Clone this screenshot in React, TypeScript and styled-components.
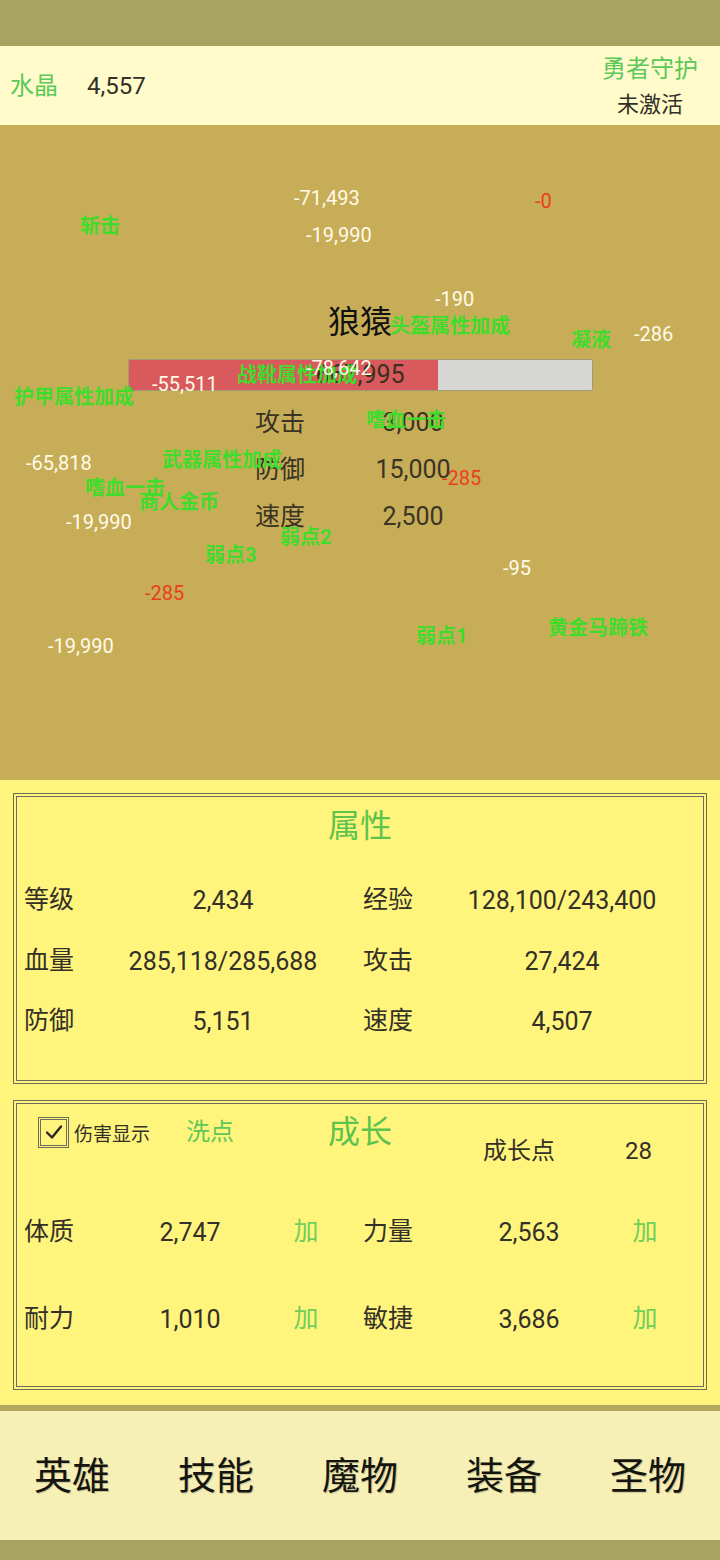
import * as React from "react";
import styled, { createGlobalStyle } from "styled-components";

const GlobalStyle = createGlobalStyle`
  html, body {
    margin: 0;
    padding: 0;
    background: #a9a363;
  }
  body {
    font-family: Roboto, "Noto Sans CJK SC", sans-serif;
  }
`;

const Screen = styled.div`
  width: 720px;
  height: 1560px;
  display: flex;
  flex-direction: column;
  overflow: hidden;
`;

const StatusBar = styled.div`
  height: 46px;
  flex: none;
  background: #a9a363;
`;

const Header = styled.div`
  height: 79px;
  flex: none;
  background: #fffbca;
  display: flex;
  align-items: center;
  justify-content: space-between;
  padding: 0 22px 0 10px;
  box-sizing: border-box;
`;

const CrystalGroup = styled.div`
  display: flex;
  align-items: center;
  gap: 29px;
`;

const GreenLabel = styled.span<{ $size?: number }>`
  color: #5cc85a;
  font-size: ${(p) => p.$size ?? 24}px;
  line-height: 36px;
`;

const DarkText = styled.span<{ $size?: number }>`
  color: #333028;
  font-size: ${(p) => p.$size ?? 24}px;
  line-height: 36px;
`;

const GuardGroup = styled.div`
  display: flex;
  flex-direction: column;
  align-items: center;
  padding-top: 2px;
`;

const Battle = styled.div`
  height: 655px;
  flex: none;
  background: #c8ad58;
  position: relative;
  padding-top: 177px;
  box-sizing: border-box;
`;

const MonsterName = styled.div`
  text-align: center;
  font-size: 32px;
  line-height: 40px;
  color: #111;
`;

const HpBar = styled.div`
  width: 465px;
  height: 32px;
  margin: 17px auto 0;
  box-sizing: border-box;
  border: 1px solid #a39a78;
  border-radius: 2px;
  background: #d6d6d4;
  position: relative;
  overflow: hidden;
`;

const HpFill = styled.div`
  position: absolute;
  left: 0;
  top: 0;
  bottom: 0;
  background: #d95a5c;
`;

const HpText = styled.div`
  position: relative;
  text-align: center;
  font-size: 25px;
  line-height: 30px;
  color: #3a3022;
`;

const MonsterStats = styled.div`
  display: grid;
  grid-template-columns: 100px 116px;
  margin: 8px 0 0 255px;
`;

const MonsterCell = styled.div<{ $value?: boolean }>`
  font-size: 25px;
  line-height: 47px;
  height: 47px;
  color: #3a3424;
  text-align: ${(p) => (p.$value ? "center" : "left")};
`;

const Float = styled.div<{ $kind: "w" | "g" | "r" }>`
  position: absolute;
  font-size: 20px;
  line-height: 22px;
  white-space: nowrap;
  font-weight: ${(p) => (p.$kind === "g" ? 700 : 400)};
  color: ${(p) =>
    p.$kind === "w" ? "#fffbe8" : p.$kind === "g" ? "#3fdc2c" : "#e8401c"};
`;

const PanelArea = styled.div`
  flex: none;
  height: 625px;
  background: #fff47c;
  padding: 13px 13px 15px;
  box-sizing: border-box;
  display: flex;
  flex-direction: column;
  gap: 16px;
`;

const Panel = styled.div<{ $height: number }>`
  height: ${(p) => p.$height}px;
  border: 4px double #6e6c5c;
  box-sizing: border-box;
`;

const PanelTitle = styled.div`
  text-align: center;
  font-size: 32px;
  line-height: 40px;
  color: #5cc34e;
`;

const AttrTitle = styled(PanelTitle)`
  padding-top: 9px;
  margin-bottom: 25px;
`;

const RowGrid = styled.div<{ $cols: string; $rowHeight: number }>`
  display: grid;
  grid-template-columns: ${(p) => p.$cols};
  grid-auto-rows: ${(p) => p.$rowHeight}px;
  align-items: center;
  padding-left: 7px;
`;

const Cell = styled.div<{ $center?: boolean; $green?: boolean }>`
  font-size: 25px;
  line-height: 36px;
  color: ${(p) => (p.$green ? "#6fcf5a" : "#333028")};
  text-align: ${(p) => (p.$center ? "center" : "left")};
  white-space: nowrap;
`;

const LabelCell = styled(Cell)`
  position: relative;
  top: -1px;
`;

const GrowthHeader = styled.div`
  display: grid;
  grid-template-columns: 1fr auto 1fr;
  align-items: start;
  padding-top: 8px;
  margin-bottom: 18px;
`;

const GrowthLeft = styled.div`
  display: flex;
  align-items: center;
  height: 40px;
  padding-left: 21px;
`;

const CheckBox = styled.div`
  width: 31px;
  height: 31px;
  box-sizing: border-box;
  border: 3px double #6e6c5c;
  display: flex;
  align-items: center;
  justify-content: center;
  margin-right: 5px;
`;

const CheckLabel = styled.span`
  font-size: 19px;
  color: #333028;
  margin-right: 36px;
`;

const GrowthRight = styled.div`
  display: flex;
  align-items: center;
  height: 40px;
  margin-top: 19px;
  padding-left: 91px;
  gap: 70px;
`;

const Divider = styled.div`
  height: 6px;
  flex: none;
  background: #b3a95e;
`;

const Nav = styled.div`
  height: 129px;
  flex: none;
  background: #f7f0b6;
  display: grid;
  grid-template-columns: repeat(5, 1fr);
  align-items: center;
`;

const NavItem = styled.div`
  text-align: center;
  font-size: 38px;
  color: #151510;
  text-shadow: 1px 1px 1px rgba(0, 0, 0, 0.2);
  position: relative;
  top: -3px;
`;

const BottomBar = styled.div`
  flex: 1;
  background: #a9a363;
`;

type Kind = "w" | "g" | "r";

const floats: [string, number, number, Kind][] = [
  ["-71,493", 294, 198, "w"],
  ["-19,990", 306, 235, "w"],
  ["斩击", 80, 226, "g"],
  ["-0", 535, 201, "r"],
  ["-190", 435, 299, "w"],
  ["头盔属性加成", 390, 326, "g"],
  ["凝液", 571, 340, "g"],
  ["-286", 634, 334, "w"],
  ["战靴属性加成", 237, 375, "g"],
  ["-78,642", 306, 368, "w"],
  ["-55,511", 152, 384, "w"],
  ["护甲属性加成", 14, 397, "g"],
  ["嗜血一击", 366, 420, "g"],
  ["-65,818", 26, 463, "w"],
  ["武器属性加成", 162, 460, "g"],
  ["嗜血一击", 85, 488, "g"],
  ["商人金币", 139, 502, "g"],
  ["-19,990", 66, 522, "w"],
  ["-285", 442, 478, "r"],
  ["弱点2", 280, 537, "g"],
  ["弱点3", 205, 555, "g"],
  ["-285", 145, 593, "r"],
  ["-95", 503, 568, "w"],
  ["弱点1", 416, 636, "g"],
  ["黄金马蹄铁", 548, 628, "g"],
  ["-19,990", 48, 646, "w"],
];

const attrs = [
  ["等级", "2,434", "经验", "128,100/243,400"],
  ["血量", "285,118/285,688", "攻击", "27,424"],
  ["防御", "5,151", "速度", "4,507"],
];

const growth = [
  ["体质", "2,747", "力量", "2,563"],
  ["耐力", "1,010", "敏捷", "3,686"],
];

const navs = ["英雄", "技能", "魔物", "装备", "圣物"];

const hp = 667995;
const hpMax = 1000000;

const App: React.FC = () => (
  <Screen>
    <GlobalStyle />
    <StatusBar />
    <Header>
      <CrystalGroup>
        <GreenLabel>水晶</GreenLabel>
        <DarkText>4,557</DarkText>
      </CrystalGroup>
      <GuardGroup>
        <GreenLabel>勇者守护</GreenLabel>
        <DarkText $size={22}>未激活</DarkText>
      </GuardGroup>
    </Header>

    <Battle>
      <MonsterName>狼猿</MonsterName>
      <HpBar>
        <HpFill style={{ width: `${(hp / hpMax) * 100}%` }} />
        <HpText>{hp.toLocaleString("en-US")}</HpText>
      </HpBar>
      <MonsterStats>
        <MonsterCell>攻击</MonsterCell>
        <MonsterCell $value>3,000</MonsterCell>
        <MonsterCell>防御</MonsterCell>
        <MonsterCell $value>15,000</MonsterCell>
        <MonsterCell>速度</MonsterCell>
        <MonsterCell $value>2,500</MonsterCell>
      </MonsterStats>
      {floats.map(([text, x, y, kind], i) => (
        <Float key={i} $kind={kind} style={{ left: x, top: y - 125 - 11 }}>
          {text}
        </Float>
      ))}
    </Battle>

    <PanelArea>
      <Panel $height={291}>
        <AttrTitle>属性</AttrTitle>
        <RowGrid $cols="86px 226px 27px 86px 226px" $rowHeight={60.5}>
          {attrs.map((row) => (
            <React.Fragment key={row[0]}>
              <LabelCell>{row[0]}</LabelCell>
              <Cell $center>{row[1]}</Cell>
              <div />
              <LabelCell>{row[2]}</LabelCell>
              <Cell $center>{row[3]}</Cell>
            </React.Fragment>
          ))}
        </RowGrid>
      </Panel>

      <Panel $height={290}>
        <GrowthHeader>
          <GrowthLeft>
            <CheckBox>
              <svg width="20" height="20" viewBox="0 0 20 20">
                <path
                  d="M3 10.5 L8 15.5 L17 4.5"
                  fill="none"
                  stroke="#2a2820"
                  strokeWidth="2.4"
                  strokeLinecap="round"
                  strokeLinejoin="round"
                />
              </svg>
            </CheckBox>
            <CheckLabel>伤害显示</CheckLabel>
            <GreenLabel>洗点</GreenLabel>
          </GrowthLeft>
          <PanelTitle>成长</PanelTitle>
          <GrowthRight>
            <DarkText>成长点</DarkText>
            <DarkText>28</DarkText>
          </GrowthRight>
        </GrowthHeader>
        <RowGrid $cols="86px 160px 72px 21px 86px 160px 72px" $rowHeight={87}>
          {growth.map((row) => (
            <React.Fragment key={row[0]}>
              <LabelCell>{row[0]}</LabelCell>
              <Cell $center>{row[1]}</Cell>
              <LabelCell $center $green>
                加
              </LabelCell>
              <div />
              <LabelCell>{row[2]}</LabelCell>
              <Cell $center>{row[3]}</Cell>
              <LabelCell $center $green>
                加
              </LabelCell>
            </React.Fragment>
          ))}
        </RowGrid>
      </Panel>
    </PanelArea>

    <Divider />
    <Nav>
      {navs.map((n) => (
        <NavItem key={n}>{n}</NavItem>
      ))}
    </Nav>
    <BottomBar />
  </Screen>
);

export default App;
